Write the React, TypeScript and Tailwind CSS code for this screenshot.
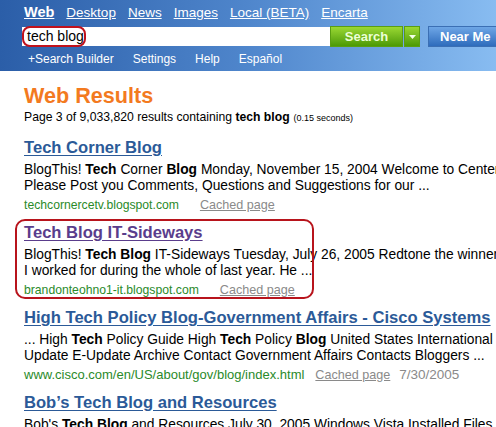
import React from "react";

type Result = {
  title: string;
  visited?: boolean;
  lines: React.ReactNode[];
  url: string;
  smallUrl?: boolean;
  date?: string;
  marked?: boolean;
};

const B = ({ children }: { children: React.ReactNode }) => (
  <span className="font-bold">{children}</span>
);

const results: Result[] = [
  {
    title: "Tech Corner Blog",
    lines: [
      <>
        BlogThis! <B>Tech</B> Corner <B>Blog</B> Monday, November 15, 2004 Welcome to Center of
      </>,
      <>Please Post you Comments, Questions and Suggestions for our ...</>,
    ],
    url: "techcornercetv.blogspot.com",
  },
  {
    title: "Tech Blog IT-Sideways",
    visited: true,
    marked: true,
    lines: [
      <>
        BlogThis! <B>Tech Blog</B> IT-Sideways Tuesday, July 26, 2005 Redtone the winner of
      </>,
      <>I worked for during the whole of last year. He ...</>,
    ],
    url: "brandonteohno1-it.blogspot.com",
  },
  {
    title: "High Tech Policy Blog-Government Affairs - Cisco Systems",
    lines: [
      <>
        ... High <B>Tech</B> Policy Guide High <B>Tech</B> Policy <B>Blog</B> United States International
      </>,
      <>Update E-Update Archive Contact Government Affairs Contacts Bloggers ...</>,
    ],
    url: "www.cisco.com/en/US/about/gov/blog/index.html",
    smallUrl: true,
    date: "7/30/2005",
  },
  {
    title: "Bob\u2019s Tech Blog and Resources",
    lines: [
      <>
        Bob's <B>Tech Blog</B> and Resources July 30, 2005 Windows Vista Installed Files
      </>,
      <>and more ...</>,
    ],
    url: "bobstechblog.blogspot.com",
  },
];

function ResultItem({ r }: { r: Result }) {
  return (
    <div className="relative mb-[9px]">
      {r.marked && (
        <div className="absolute -left-[9px] -top-[4px] w-[299px] h-[80px] border-2 border-[#b8141c] rounded-[10px] pointer-events-none" />
      )}
      <div
        className={`text-[16.6px] leading-[20px] font-bold underline underline-offset-2 whitespace-nowrap ${
          r.visited ? "text-[#5a3d8c]" : "text-[#2b5a98]"
        }`}
      >
        {r.title}
      </div>
      <div className="mt-[4px] text-[13.8px] leading-[16px] text-black">
        {r.lines.map((l, i) => (
          <div key={i} className="whitespace-nowrap">
            {l}
          </div>
        ))}
      </div>
      <div className="mt-[2px] h-[18px] flex items-center whitespace-nowrap">
        <span className={`text-[#2a8a2a] ${r.smallUrl ? "text-[13px]" : "text-[12.2px]"}`}>
          {r.url}
        </span>
        <span
          className={`text-[12.6px] text-[#8a8a8a] underline ${r.smallUrl ? "ml-[11px]" : "ml-[21px]"}`}
        >
          Cached page
        </span>
        {r.date && <span className="ml-[9px] text-[13.5px] text-[#8a8a8a]">{r.date}</span>}
      </div>
    </div>
  );
}

export default function App() {
  return (
    <div className="w-[496px] h-[427px] overflow-hidden bg-white font-['Liberation_Sans',Arial,sans-serif]">
      {/* header band */}
      <div className="h-[71px] bg-gradient-to-r from-[#2b5ea8] via-[#4f86cc] to-[#88bcf1] overflow-hidden">
        <div className="h-[26px] flex items-center gap-3 pl-[24px] text-[13.5px] text-white whitespace-nowrap">
          <span className="font-bold underline text-[14.5px]">Web</span>
          <span className="underline">Desktop</span>
          <span className="underline">News</span>
          <span className="underline">Images</span>
          <span className="underline">Local (BETA)</span>
          <span className="underline">Encarta</span>
        </div>
        <div className="h-[21px] flex items-center pl-[22px] whitespace-nowrap">
          <div className="relative shrink-0 w-[308px] h-[19px] bg-white flex items-center">
            <span className="pl-[5px] text-[14px] text-black">tech blog</span>
            <div className="absolute left-0 -top-[1px] w-[64px] h-[21px] border-2 border-[#c0121c] rounded-[8px]" />
          </div>
          <div className="shrink-0 w-[73px] h-[21px] bg-gradient-to-b from-[#9ad832] to-[#4c9a04] border border-[#5a9e12] flex items-center justify-center text-[13px] font-bold text-[#ecffd6]">
            Search
          </div>
          <div className="shrink-0 ml-[1px] w-[16px] h-[21px] bg-gradient-to-b from-[#9ad832] to-[#4c9a04] border border-[#5a9e12] flex items-center justify-center">
            <svg width="7" height="4" viewBox="0 0 7 4">
              <path d="M0 0h7L3.5 4z" fill="#f4ffe8" />
            </svg>
          </div>
          <div className="shrink-0 ml-[8px] w-[80px] h-[21px] bg-gradient-to-b from-[#6ea6e6] to-[#2e6cbc] border border-[#3b6fb4] flex items-center pl-[11px] text-[13px] font-bold text-white">
            Near Me
          </div>
        </div>
        <div className="h-[24px] flex items-center gap-[19px] pl-[28px] text-[12px] text-white whitespace-nowrap">
          <span>+Search Builder</span>
          <span>Settings</span>
          <span>Help</span>
          <span>Español</span>
        </div>
      </div>

      {/* results */}
      <div className="pl-[24px] pt-[13px]">
        <div className="text-[21.6px] leading-[24px] font-bold text-[#f37a1f]">Web Results</div>
        <div className="h-[17px] flex items-baseline whitespace-nowrap text-[12.2px] text-black">
          <span>Page 3 of 9,033,820 results containing&nbsp;</span>
          <span className="font-bold">tech blog</span>
          <span className="ml-[4px] text-[9px]">(0.15 seconds)</span>
        </div>
        <div className="mt-[13px]">
          {results.map((r) => (
            <ResultItem key={r.title} r={r} />
          ))}
        </div>
      </div>
    </div>
  );
}
